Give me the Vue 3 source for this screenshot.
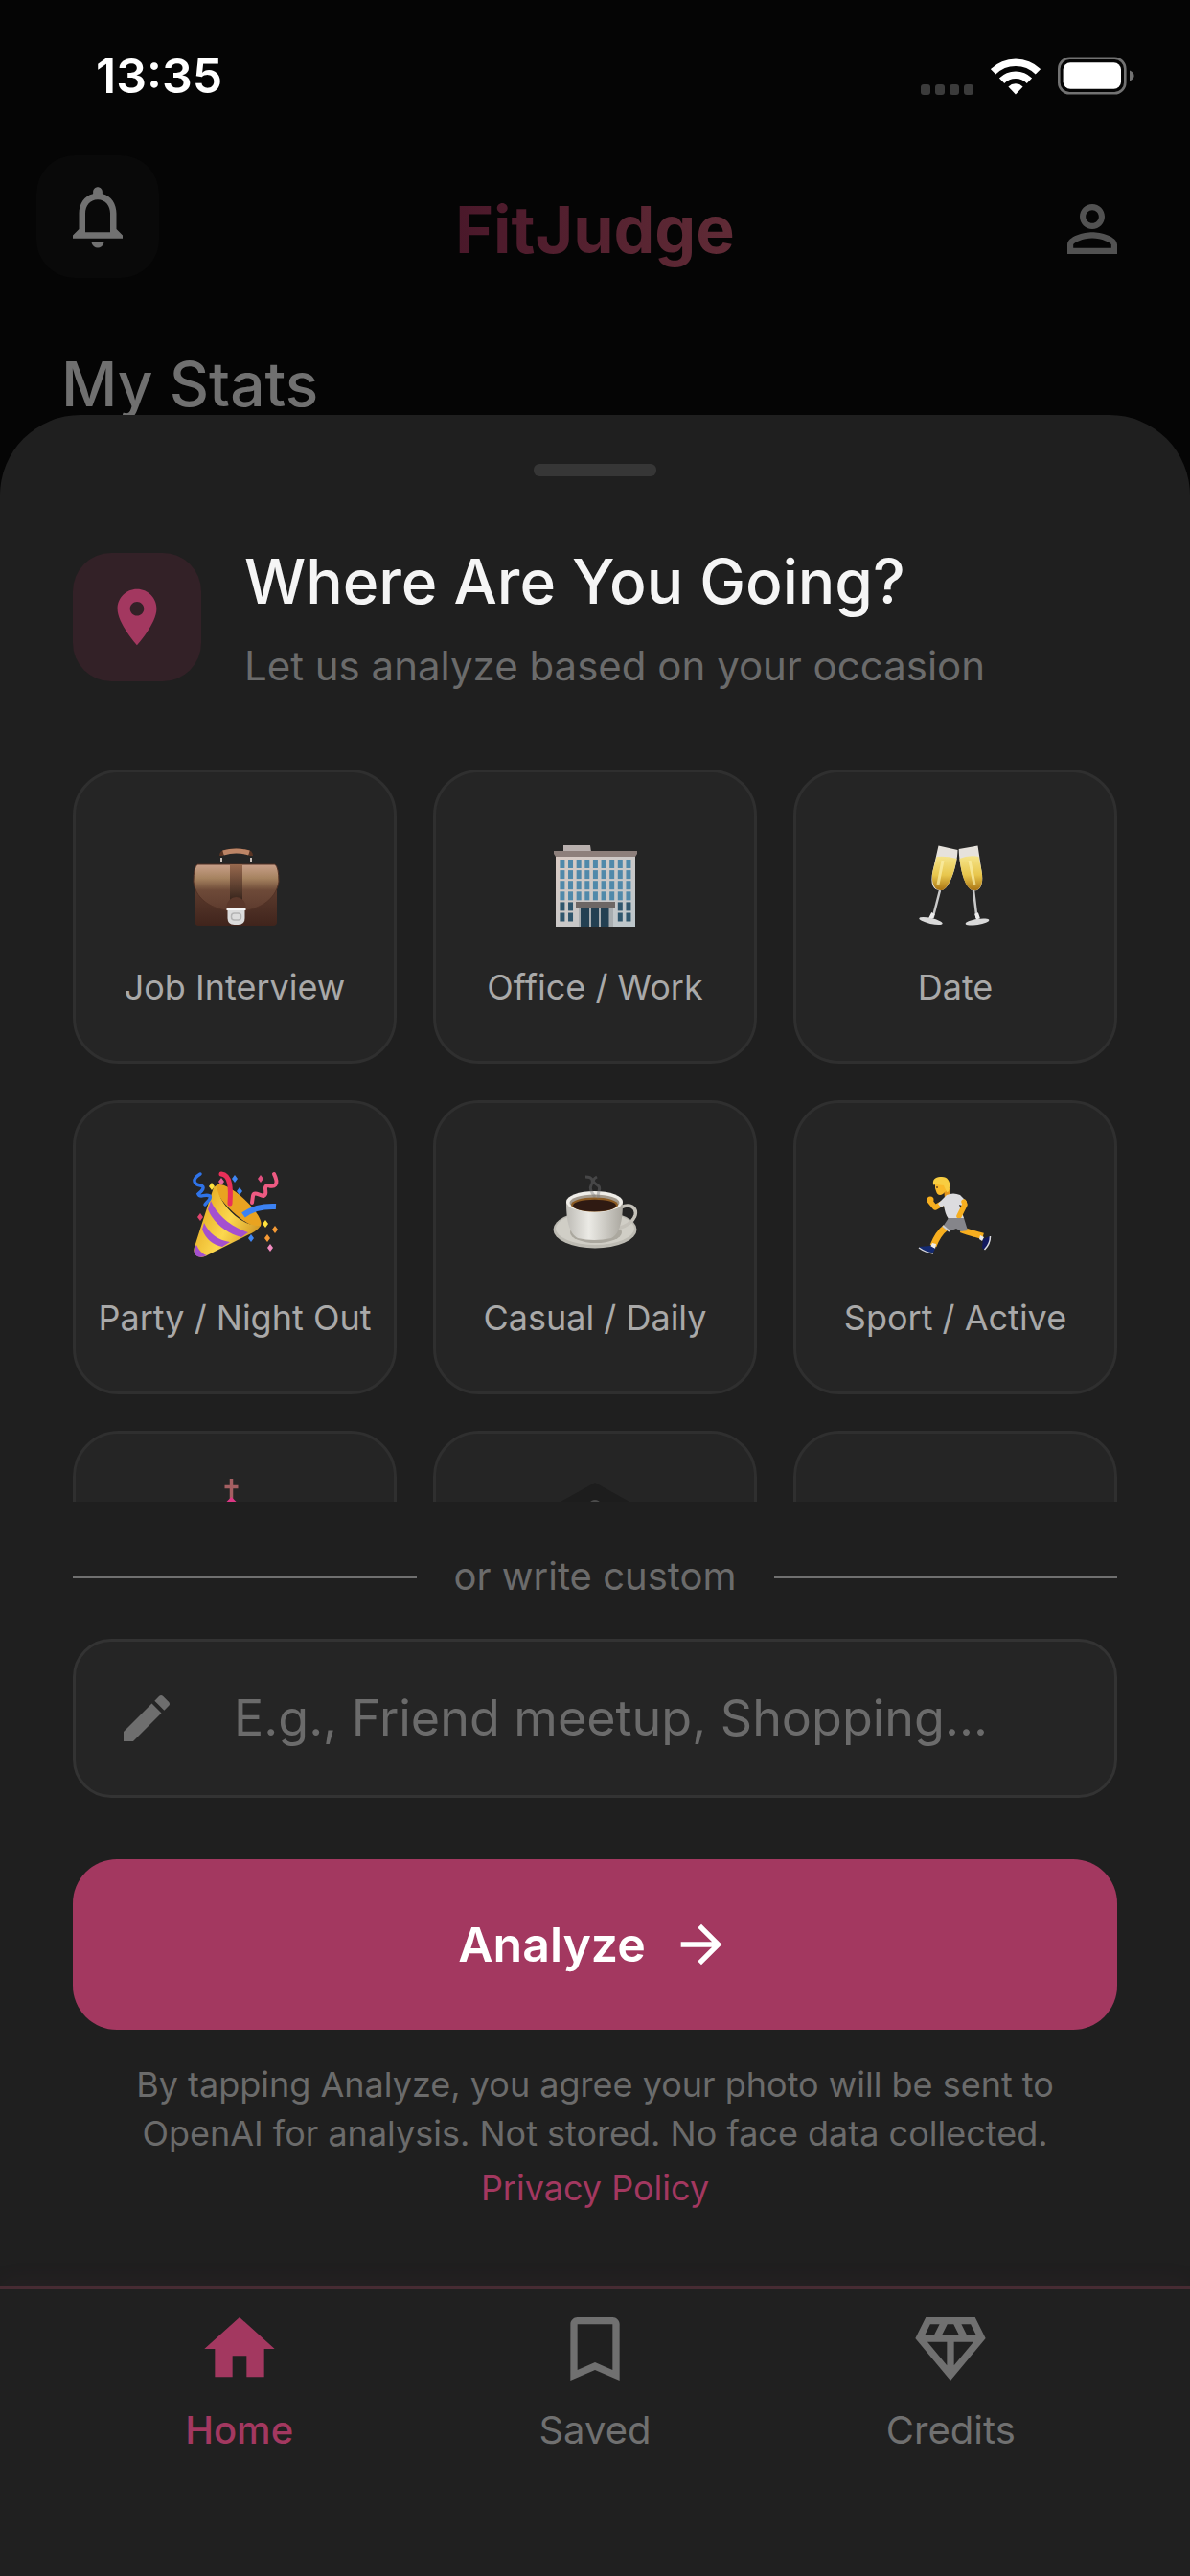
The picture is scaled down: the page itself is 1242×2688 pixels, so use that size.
<script setup>
import { ref } from 'vue'

const custom = ref('')
const selected = ref(null)
const activeTab = ref('home')

const occasions = [
    { id: 'interview', label: 'Job Interview' },
    { id: 'office', label: 'Office / Work' },
    { id: 'date', label: 'Date' },
    { id: 'party', label: 'Party / Night Out' },
    { id: 'casual', label: 'Casual / Daily' },
    { id: 'sport', label: 'Sport / Active' },
    { id: 'wedding', label: '', tall: true },
    { id: 'graduation', label: '', tall: true },
    { id: 'other', label: '' },
]

const tabs = [
    { id: 'home', label: 'Home', path: 'M10 20v-6h4v6h5v-8h3L12 3 2 12h3v8z' },
    { id: 'saved', label: 'Saved', path: 'M17 3H7c-1.1 0-1.99.9-1.99 2L5 21l7-3 7 3V5c0-1.1-.9-2-2-2zm0 15-5-2.18L7 18V5h10v13z' },
    { id: 'credits', label: 'Credits', path: 'M19 3H5L2 9l10 12L22 9l-3-6zM9.62 8l1.5-3h1.76l1.5 3H9.62zM11 10v6.68L5.44 10H11zm2 0h5.56L13 16.68V10zm6.26-2h-2.65l-1.5-3h2.65l1.5 3zM6.24 5h2.65l-1.5 3H4.74l1.5-3z' },
]

// Office facade: the two lowest rows leave room for the entrance
const officeWindows = []
for (let row = 0; row < 6; row++) {
    for (let col = 0; col < 9; col++) {
        if (row > 3 && col > 1 && col < 7) continue
        officeWindows.push({ x: 8.4 + col * 8.63, y: 19 + row * 11.1, fill: row > 3 ? '#2f566d' : '#5089aa' })
    }
}

const confetti = [
    { x: 21, y: 15, fill: '#ffe23d' },
    { x: 31, y: 10, fill: '#e8679a' },
    { x: 45, y: 7, fill: '#3f86f5' },
    { x: 50, y: 20, fill: '#3f86f5' },
    { x: 72, y: 7, fill: '#e0507f' },
    { x: 9, y: 47, fill: '#e0456f' },
    { x: 77, y: 54, fill: '#ffe23d' },
    { x: 87, y: 60, fill: '#f59a35' },
    { x: 79, y: 69, fill: '#f59a35' },
    { x: 62, y: 69, fill: '#3f86f5' },
    { x: 82, y: 79, fill: '#f28bc0' },
]
</script>

<template>
    <div class="screen">
        <div class="status-bar">
            <span class="status-time">13:35</span>
            <div class="status-icons">
                <div class="signal"><i></i><i></i><i></i><i></i></div>
                <svg class="wifi" viewBox="0 0 52 40" aria-hidden="true">
                    <g fill="none" stroke="#fff" stroke-width="7.6">
                        <path d="M2.6 15.8a33.5 33.5 0 0 1 46.8 0" />
                        <path d="M11.6 25.2a20.5 20.5 0 0 1 28.8 0" />
                    </g>
                    <path d="M26 39.5 18.4 31.4a11 11 0 0 1 15.2 0z" fill="#fff" />
                </svg>
                <svg class="battery" viewBox="0 0 80 40" aria-hidden="true">
                    <rect x="1.3" y="1.8" width="69" height="36.4" rx="11" fill="none" stroke="#727272" stroke-width="2.6" />
                    <rect x="5.6" y="6.2" width="60.4" height="27.6" rx="7.5" fill="#fff" />
                    <path d="M75 14.5c2.8.9 4.6 3 4.6 5.5s-1.8 4.6-4.6 5.5z" fill="#727272" />
                </svg>
            </div>
        </div>

        <header class="top-bar">
            <button class="top-btn bell" aria-label="Notifications">
                <svg viewBox="0 0 24 24"><path d="M12 22c1.1 0 2-.9 2-2h-4c0 1.1.9 2 2 2zm6-6v-5c0-3.07-1.63-5.64-4.5-6.32V4c0-.83-.67-1.5-1.5-1.5s-1.5.67-1.5 1.5v.68C7.64 5.36 6 7.92 6 11v5l-2 2v1h16v-1l-2-2zm-2 1H8v-6c0-2.48 1.51-4.5 4-4.5s4 2.02 4 4.5v6z" /></svg>
            </button>
            <span class="brand">FitJudge</span>
            <button class="top-btn profile" aria-label="Profile">
                <svg viewBox="0 0 24 24"><path d="M12 5.9c1.16 0 2.1.94 2.1 2.1s-.94 2.1-2.1 2.1S9.9 9.16 9.9 8s.94-2.1 2.1-2.1m0 9c2.97 0 6.1 1.46 6.1 2.1v1.1H5.9V17c0-.64 3.13-2.1 6.1-2.1M12 4C9.79 4 8 5.79 8 8s1.79 4 4 4 4-1.79 4-4-1.79-4-4-4zm0 9c-2.67 0-8 1.34-8 4v3h16v-3c0-2.66-5.33-4-8-4z" /></svg>
            </button>
        </header>
        <h2 class="stats-title">My Stats</h2>

        <main class="sheet">
            <div class="handle"></div>

            <div class="sheet-head">
                <div class="pin-box">
                    <svg viewBox="0 0 24 24"><path d="M12 2C8.13 2 5 5.13 5 9c0 5.25 7 13 7 13s7-7.75 7-13c0-3.87-3.13-7-7-7zm0 9.5c-1.38 0-2.5-1.12-2.5-2.5s1.12-2.5 2.5-2.5 2.5 1.12 2.5 2.5-1.12 2.5-2.5 2.5z" /></svg>
                </div>
                <div class="sheet-text">
                    <h1>Where Are You Going?</h1>
                    <p>Let us analyze based on your occasion</p>
                </div>
            </div>

            <div class="grid">
                <button
                    v-for="item in occasions"
                    :key="item.id"
                    class="card"
                    :class="{ selected: selected === item.id }"
                    :aria-label="item.label || item.id"
                    @click="selected = item.id"
                >
                    <svg v-if="item.id === 'interview'" class="emoji" viewBox="0 0 90 90">
                        <defs>
                            <linearGradient id="flap" x1="0" y1="0" x2="0" y2="1">
                                <stop offset="0" stop-color="#c9a08a" />
                                <stop offset=".3" stop-color="#a5825f" />
                                <stop offset=".55" stop-color="#6e4a38" />
                                <stop offset="1" stop-color="#5c3a2d" />
                            </linearGradient>
                            <linearGradient id="case" x1="0" y1="0" x2="0" y2="1">
                                <stop offset="0" stop-color="#6e4a39" />
                                <stop offset="1" stop-color="#40241c" />
                            </linearGradient>
                            <linearGradient id="strap" x1="0" y1="0" x2="0" y2="1">
                                <stop offset="0" stop-color="#98694e" />
                                <stop offset="1" stop-color="#35231b" />
                            </linearGradient>
                        </defs>
                        <path d="M31 15q0-4 5-4.500 10-2 21 0 5 .5 5 4.500" fill="none" stroke="#5a3524" stroke-width="4" />
                        <path d="M33 12q13.500-4 27 0" fill="none" stroke="#bd8566" stroke-width="5" />
                        <path d="M31 17v5M62 17v5" stroke="#c9c0ba" stroke-width="2" />
                        <rect x="3.5" y="25" width="85.5" height="63" rx="4" fill="url(#case)" />
                        <path d="M6 24h81q4 3 4 18C88 62 68 73 46.500 73S4 62 2 42Q2 27 6 24z" fill="url(#flap)" stroke="#513125" stroke-width="1" />
                        <rect x="40" y="24" width="13" height="38" fill="url(#strap)" />
                        <circle cx="46.5" cy="68" r="10" fill="#5b382b" />
                        <path d="M37.500 71h18v9q0 7-7 7h-4q-7 0-7-7z" fill="#dcdcdc" />
                        <path d="M36.500 69h20v3h-20z" fill="#f6f6f6" />
                        <rect x="41.5" y="75" width="10" height="7" rx="3" fill="none" stroke="#b4b4b4" stroke-width="1.5" />
                    </svg>

                    <svg v-else-if="item.id === 'office'" class="emoji" viewBox="0 0 90 90">
                        <defs>
                            <linearGradient id="wall" x1="0" y1="0" x2="1" y2="1">
                                <stop offset="0" stop-color="#dacbc4" />
                                <stop offset="1" stop-color="#bcc6cb" />
                            </linearGradient>
                        </defs>
                        <path d="M12 4h28l1 7H12z" fill="#b9b0ae" />
                        <path d="M4 13h83v76H4z" fill="url(#wall)" />
                        <path d="M2 10h87v3l-2 3H4l-2-3z" fill="#8d7f7b" />
                        <rect v-for="(w, i) in officeWindows" :key="i" :x="w.x" :y="w.y" width="5" height="9" :fill="w.fill" />
                        <path d="M28 69h36v20H28z" fill="#a8adb0" />
                        <path d="M30 69h9v20h-9zM41 69h8v20h-8zM51 69h8.500v20h-8.500z" fill="#234052" />
                        <path d="M25 63h41v7H25z" fill="#6d6765" />
                    </svg>

                    <svg v-else-if="item.id === 'date'" class="emoji" viewBox="0 0 90 90">
                        <defs>
                            <linearGradient id="wine" x1="0" y1="0" x2="0" y2="1">
                                <stop offset="0" stop-color="#f5e48a" />
                                <stop offset=".55" stop-color="#e8c64c" />
                                <stop offset="1" stop-color="#a97312" />
                            </linearGradient>
                        </defs>
                        <path d="M27.500 4.500 47.500 9C47 26 39 50 31 51s-13-5-9.500-20z" fill="#e6e2dc" />
                        <path d="M25.500 16q10-1 21 2C44 34 37 50 31 51s-12-5-9.500-20z" fill="url(#wine)" />
                        <path d="M68.500 4.500 48.700 8C49 26 55 49 63 51s12-6 9.500-20z" fill="#e6e2dc" />
                        <path d="M49.500 18q9-4 20-2l3 15c2.500 14-2 22-9.500 20S51 33 49.500 18z" fill="url(#wine)" />
                        <path d="m32 20-5 25M60 20l5 25" stroke="#fbf0a9" stroke-width="3" fill="none" opacity=".7" />
                        <path d="m29 51-7.500 29M64 51l3.500 29" stroke="#c9c9c9" stroke-width="2.5" fill="none" />
                        <path d="m22 75-3 6M67 75l2 6" stroke="#ededed" stroke-width="4" />
                        <ellipse cx="19.5" cy="83" rx="12.5" ry="3" transform="rotate(13 19.5 83)" fill="#d9d9d9" />
                        <ellipse cx="68" cy="84" rx="12.5" ry="3" transform="rotate(-9 68 84)" fill="#d9d9d9" />
                    </svg>

                    <svg v-else-if="item.id === 'party'" class="emoji" viewBox="0 0 90 90">
                        <defs>
                            <linearGradient id="cone" x1="0" y1=".3" x2="1" y2=".8">
                                <stop offset="0" stop-color="#e2a51d" />
                                <stop offset=".5" stop-color="#fcd84f" />
                                <stop offset="1" stop-color="#c98a1b" />
                            </linearGradient>
                        </defs>
                        <ellipse cx="49" cy="35" rx="31" ry="9" transform="rotate(43 49 35)" fill="#e9a320" />
                        <path d="M26 14C28 32 50 57 72 56q-4 6-14 10L14 88q-5 2-9-1-4-3-2-9l20-62z" fill="url(#cone)" />
                        <path d="M20 30C26 44 40 57 59 63l-7 5C36 64 23 53 17 39zM13 53q8 17 27 20l-8 5Q17 75 11 60zM5 76q4 9 11 11-9 4-12.500-1.500-2.500-4 1.500-9.500z" fill="#a450cf" />
                        <g fill="none" stroke-linecap="round">
                            <path d="M9 2C-1 8 3 13 9 14s2 6-2 9c2 5 7-1 12 2 2 3-3 6-5 9" stroke="#2f73e8" stroke-width="3.5" />
                            <path d="M31 2c10 1 10 16 9 31" stroke="#e92f59" stroke-width="5" />
                            <path d="M86 2c6 12 0 14-6 12-7 1 1 9-5 11-5-1-10-5-11 0l-1 7" stroke="#ee5a82" stroke-width="4" />
                            <path d="M54 45q13-10 34-9" stroke="#3c82f3" stroke-width="6" stroke-linecap="butt" />
                        </g>
                        <path v-for="(c, i) in confetti" :key="i" :d="`M${c.x} ${c.y - 4}l3 4-3 4-3-4z`" :fill="c.fill" />
                    </svg>

                    <svg v-else-if="item.id === 'casual'" class="emoji" viewBox="0 0 90 90">
                        <defs>
                            <linearGradient id="cup" x1="0" y1="0" x2="1" y2="0">
                                <stop offset="0" stop-color="#bdbbb5" />
                                <stop offset=".4" stop-color="#ebeae5" />
                                <stop offset="1" stop-color="#aaa79f" />
                            </linearGradient>
                        </defs>
                        <ellipse cx="45" cy="60" rx="43.5" ry="19.5" fill="#bdbbb3" />
                        <ellipse cx="45" cy="59" rx="41" ry="17" fill="#d0cec6" />
                        <ellipse cx="46" cy="63" rx="27" ry="11" fill="#aba89f" />
                        <path d="M72 37c9-5 17 0 15 8-2 7-8 11-18 14" fill="none" stroke="#c4c1b9" stroke-width="3.5" />
                        <path d="M15 31c0 20 3 33 12 38q17 4 35 0c9-5 12-18 12-38z" fill="url(#cup)" />
                        <ellipse cx="44.5" cy="31" rx="29.5" ry="11" fill="#efede8" />
                        <ellipse cx="44.5" cy="32" rx="26" ry="8.5" fill="#a39a8e" />
                        <ellipse cx="44.5" cy="34" rx="24.5" ry="7.5" fill="#8b5a22" />
                        <ellipse cx="44.5" cy="35" rx="22.5" ry="6.3" fill="#2f1a12" />
                        <path d="M35 5c9 0 8 6 6 9s0 7 4 12M47 5c-6 3-4 6 1 9s-2 7 1 13" fill="none" stroke="#77777a" stroke-width="3" opacity=".4" />
                    </svg>

                    <svg v-else-if="item.id === 'sport'" class="emoji" viewBox="0 0 90 90">
                        <g fill="none" stroke="#f6ae1f" stroke-linecap="round" stroke-linejoin="round">
                            <path d="M19 31l5 6 7-4" stroke-width="5.5" />
                            <path d="M35 58q-8 6-13 19" stroke-width="7" stroke-linecap="butt" />
                            <path d="M51 60q8 3 23 7" stroke-width="6.5" stroke-linecap="butt" />
                        </g>
                        <circle cx="19" cy="29" r="3.5" fill="#f6ae1f" />
                        <path d="M33 17h6l1 7-6 3z" fill="#e5961a" />
                        <path d="M24 11v6l1 3c1 4 4 5 7 3l6-6V9z" fill="#f9b92a" />
                        <path d="M22 13C21 6 26 5 31 5c6 0 9 5 8 10 0 4-1 6-3 6-1-3-2-4-3-7-3 0-5-1-8-1-1 0-3 1-3 0z" fill="#f8cd41" />
                        <circle cx="26" cy="16" r="1" fill="#6a4417" />
                        <path d="M36 24q7-3 14 0l7 7-5 4-3-1 5 14-15 2c-4-4-5-10-6-15l-3 2-3-4z" fill="#dcdcdf" />
                        <path d="m54 31 1 3-6 12" fill="none" stroke="#f6ae1f" stroke-width="5.5" stroke-linecap="round" stroke-linejoin="round" />
                        <path d="m38 48 16 0 4 13-7 1-5-3-8 3-6-5z" fill="#85858a" />
                        <path d="m32 56 7 6" stroke="#d0d0d0" stroke-width="2" />
                        <path d="m21 74 4 1-1 5-5-2zM71 66l4 2-2 4-3-2z" fill="#ececec" />
                        <path d="m7 78 12-1 5 3-2 4q-9 0-15-6z" fill="#142a70" />
                        <path d="M7 79q7 5 15 6" stroke="#d8d8de" stroke-width="1.5" fill="none" />
                        <path d="m74 70 7-3q1 7-6 14l-2-2z" fill="#11195f" />
                        <path d="M81.500 67q0 8-6 14" stroke="#d8d8de" stroke-width="1.5" fill="none" />
                    </svg>

                    <svg v-else-if="item.id === 'wedding'" class="emoji" viewBox="0 0 90 90">
                        <path d="M41.500 0v24M34.500 8.500h14" stroke="#a45f62" stroke-width="3.5" fill="none" />
                        <path d="m41.500 19 22 22h-44z" fill="#dd3785" />
                        <path d="M22 41h40v46H22z" fill="#e8cfc4" />
                    </svg>

                    <svg v-else-if="item.id === 'graduation'" class="emoji" viewBox="0 0 90 90">
                        <path d="M45 4 88 28 45 50 2 28z" fill="#1d1d1d" />
                        <ellipse cx="45" cy="25" rx="5" ry="3" fill="#4b4b4b" />
                    </svg>

                    <span v-else class="emoji"></span>

                    <span class="card-label" :class="{ tall: item.tall }">{{ item.label }}</span>
                </button>
            </div>

            <div class="divider"><span>or write custom</span></div>

            <label class="field">
                <svg viewBox="0 0 24 24" aria-hidden="true"><path d="M3 17.25V21h3.75L17.81 9.94l-3.75-3.75L3 17.25zM20.71 7.04c.39-.39.39-1.02 0-1.41l-2.34-2.34c-.39-.39-1.02-.39-1.41 0l-1.83 1.83 3.75 3.75 1.83-1.83z" /></svg>
                <input v-model="custom" type="text" placeholder="E.g., Friend meetup, Shopping..." aria-label="Custom occasion" />
            </label>

            <button class="analyze">
                Analyze
                <svg viewBox="0 0 24 24" aria-hidden="true"><path d="m12 4-1.41 1.41L16.17 11H4v2h12.17l-5.58 5.59L12 20l8-8z" /></svg>
            </button>

            <p class="legal">By tapping Analyze, you agree your photo will be sent to<br />OpenAI for analysis. Not stored. No face data collected.</p>
            <a class="privacy" href="#">Privacy Policy</a>
        </main>

        <nav class="tab-bar">
            <button
                v-for="tab in tabs"
                :key="tab.id"
                class="tab"
                :class="{ active: activeTab === tab.id }"
                @click="activeTab = tab.id"
            >
                <svg viewBox="0 0 24 24" aria-hidden="true"><path :d="tab.path" /></svg>
                <span>{{ tab.label }}</span>
            </button>
        </nav>
    </div>
</template>

<style>
body { margin: 0; background: #050505; }
</style>

<style scoped>
.screen {
    min-height: 100vh;
    display: flex; flex-direction: column;
    background: #050505;
    font-family: Inter, "Liberation Sans", sans-serif;
}
.screen *, .screen { box-sizing: border-box; }
button { margin: 0; padding: 0; border: 0; background: none; font: inherit; cursor: pointer; }
h1, h2, p { margin: 0; }
svg { display: block; flex-shrink: 0; fill: currentColor; }

/* Status bar */
.status-bar {
    display: flex; align-items: center; justify-content: space-between; flex-shrink: 0;
    height: 162px; padding: 0 58px 4px 100px;
}
.status-time { font-size: 50px; line-height: 60px; font-weight: 600; color: #fff; }
.status-icons { display: flex; align-items: center; gap: 18px; }
.signal { display: flex; align-items: flex-end; gap: 5px; height: 40px; }
.signal i { width: 10px; height: 11px; border-radius: 3px; background: #3b3b3b; }
.wifi { width: 52px; height: 40px; }
.battery { width: 80px; height: 40px; }

/* Top bar */
.top-bar {
    display: flex; align-items: center; justify-content: space-between; flex-shrink: 0;
    height: 154px; padding: 0 38px;
}
.top-btn { width: 128px; height: 128px; display: flex; align-items: center; justify-content: center; }
.top-btn svg { width: 78px; height: 78px; }
.bell { align-self: flex-start; border-radius: 40px; background: #090909; color: #717171; }
.profile { color: #525252; }
.brand {
    font-size: 68px; line-height: 88px; font-weight: 700;
    color: transparent; background: linear-gradient(90deg, #4a182a, #602b36);
    -webkit-background-clip: text; background-clip: text;
}
.stats-title { margin: 45px 64px 0; font-size: 64px; line-height: 80px; font-weight: 500; color: #707070; }

/* Bottom sheet */
.sheet {
    position: relative; flex: 1 0 auto;
    display: flex; flex-direction: column;
    margin-top: -8px; padding: 51px 76px 76px;
    border-radius: 84px 84px 0 0; background: #1f1f1f;
}
.handle { align-self: center; width: 128px; height: 13px; border-radius: 6px; background: #363636; }
.sheet-head { display: flex; align-items: center; gap: 45px; margin-top: 70px; }
.pin-box {
    width: 134px; height: 134px; border-radius: 40px;
    display: flex; align-items: center; justify-content: center;
    flex-shrink: 0; background: #332127; color: #a33860;
}
.pin-box svg { width: 70px; height: 70px; }
.sheet-text h1 { font-size: 64px; line-height: 80px; font-weight: 500; color: #f5f5f5; }
.sheet-text p { margin-top: 22px; font-size: 42px; line-height: 52px; color: #6b6b6b; }

.grid {
    display: grid; grid-template-columns: repeat(3, 1fr); grid-auto-rows: 307px; gap: 38px;
    height: 764px; margin-top: 82px; overflow: hidden;
}
.card {
    display: flex; flex-direction: column; align-items: center; justify-content: center;
    border: 3px solid #2f2f2f; border-radius: 48px; background: #252525; color: #a9a9a9;
}
.card.selected { border-color: #a33860; }
.emoji { width: 90px; height: 90px; margin-top: 20px; overflow: visible; }
.card-label { min-height: 50px; margin-top: 37px; font-size: 36px; line-height: 50px; white-space: nowrap; }
.card-label.tall { min-height: 100px; }

.divider {
    display: flex; align-items: center; gap: 39px;
    margin-top: 54px; font-size: 40px; line-height: 48px; color: #6b6b6b;
}
.divider::before, .divider::after { content: ""; flex: 1; height: 3px; background: #707070; }

.field {
    display: flex; align-items: center; gap: 59px;
    height: 166px; margin-top: 41px; padding: 0 42px;
    border: 3px solid #333; border-radius: 40px; background: #252525; color: #6e6e6e;
}
.field svg { width: 64px; height: 64px; }
.field input {
    flex: 1; min-width: 0; padding: 0; border: 0; outline: 0; background: none;
    font: inherit; font-size: 52px; line-height: 64px; color: #f5f5f5;
}
.field input::placeholder { color: #6b6b6b; opacity: 1; }

.analyze {
    display: flex; align-items: center; justify-content: center; gap: 26px;
    height: 178px; margin-top: 64px; border-radius: 46px;
    background: #a33860; color: #fff; font-size: 50px; font-weight: 600;
}
.analyze svg { width: 64px; height: 64px; }

.legal { margin-top: 32px; font-size: 36px; line-height: 51px; text-align: center; color: #6b6b6b; }
.privacy { align-self: center; margin-top: 6px; font-size: 36px; line-height: 51px; color: #a33860; text-decoration: none; }

/* Tab bar */
.tab-bar {
    position: relative;
    display: flex; padding: 18px 64px 128px;
    border-top: 4px solid #472b33; background: #202020;
    box-shadow: 0 -6px 24px rgba(163, 56, 96, 0.05);
}
.tab {
    flex: 1; display: flex; flex-direction: column; align-items: center; gap: 17px;
    font-size: 40px; line-height: 48px; color: #707070;
}
.tab svg { width: 88px; height: 88px; }
.tab.active { color: #a33860; font-weight: 500; }
</style>
